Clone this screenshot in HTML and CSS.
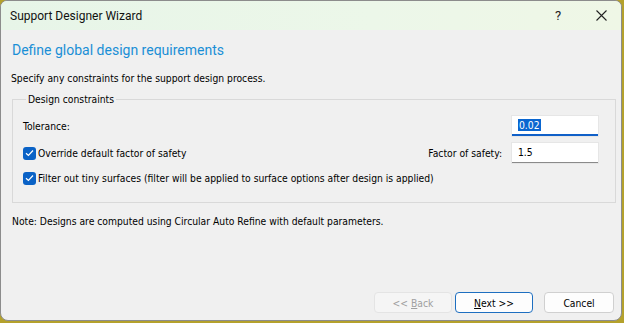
FILE: index.html
```html
<!DOCTYPE html>
<html>
<head>
<meta charset="utf-8">
<link rel="stylesheet" href="styles.css">
</head>
<body>
<div class="window">
  <div class="titlebar">
    <span class="title">Support Designer Wizard</span>
    <span class="help">?</span>
    <span class="close">
      <svg width="11" height="11" viewBox="0 0 11 11"><path d="M0.5 0.5 L10.5 10.5 M10.5 0.5 L0.5 10.5" stroke="#222" stroke-width="1.1" fill="none"/></svg>
    </span>
  </div>
  <div class="content">
    <h1 class="heading">Define global design requirements</h1>
    <p class="intro">Specify any constraints for the support design process.</p>
    <fieldset class="group">
      <legend>Design constraints</legend>
      <div class="row row-tol">
        <span class="label">Tolerance:</span>
        <span class="input input-focus"><span class="sel">0.02</span></span>
      </div>
      <div class="row row-fos">
        <span class="check"><svg width="9" height="8" viewBox="0 0 9 8"><path d="M1 4.2 L3.4 6.5 L8 1.5" stroke="#fff" stroke-width="1.2" fill="none"/></svg></span>
        <span class="label">Override default factor of safety</span>
        <span class="spacer"></span>
        <span class="label fos-label">Factor of safety:</span>
        <span class="input">1.5</span>
      </div>
      <div class="row row-filter">
        <span class="check"><svg width="9" height="8" viewBox="0 0 9 8"><path d="M1 4.2 L3.4 6.5 L8 1.5" stroke="#fff" stroke-width="1.2" fill="none"/></svg></span>
        <span class="label">Filter out tiny surfaces (filter will be applied to surface options after design is applied)</span>
      </div>
    </fieldset>
    <p class="note">Note: Designs are computed using Circular Auto Refine with default parameters.</p>
    <div class="buttons">
      <button class="btn btn-back" disabled>&lt;&lt; <u>B</u>ack</button>
      <button class="btn btn-next"><u>N</u>ext &gt;&gt;</button>
      <button class="btn btn-cancel">Cancel</button>
    </div>
  </div>
</div>
</body>
</html>
```
FILE: styles.css
```css
html, body {
  margin: 0;
  padding: 0;
}
body {
  width: 624px;
  height: 323px;
  background: #b4a12c;
  overflow: hidden;
}
.window {
  width: 620px;
  height: 319px;
  background: #f0f0f0;
  border: 1px solid #8c8c8c;
  border-radius: 7px 7px 8px 8px;
  overflow: hidden;
  display: flex;
  flex-direction: column;
  font-family: "DejaVu Sans Condensed", "DejaVu Sans", sans-serif;
  font-size: 10.25px;
  color: #000;
}
.titlebar {
  height: 29px;
  flex: none;
  display: flex;
  align-items: center;
  background: linear-gradient(90deg, #e7f5e8 0%, #ecf7e9 60%, #eff7e6 100%);
  font-family: Roboto, "Noto Sans", sans-serif;
  font-size: 12px;
}
.title {
  margin-left: 9px;
  flex: 1;
  color: #111;
}
.help {
  width: 14px;
  text-align: center;
  margin-right: 31px;
  font-size: 13px;
  color: #222;
}
.close {
  width: 11px;
  height: 11px;
  margin-right: 14px;
  display: flex;
}
.content {
  flex: 1;
  display: flex;
  flex-direction: column;
  padding: 0 5px 0 9px;
}
.heading {
  margin: 10px 0 0 2px;
  font-family: Roboto, "Noto Sans", sans-serif;
  font-weight: normal;
  font-size: 14px;
  color: #1a8fd6;
  line-height: 20px;
}
.intro {
  margin: 11px 0 0 1px;
  line-height: 14px;
}
.group {
  margin: 7px 0 0 2px;
  padding: 10px 17px 16px 10px;
  border: 1px solid #d9d9d9;
  border-radius: 0;
  display: flex;
  flex-direction: column;
}
.group legend {
  padding: 0 2px;
  margin-left: 3px;
  line-height: 14px;
}
.row {
  display: flex;
  align-items: center;
}
.row-tol {
  height: 20px;
  justify-content: space-between;
}
.row-fos {
  margin-top: 7px;
  height: 20px;
}
.row-filter {
  margin-top: 7px;
  height: 16px;
}
.spacer { flex: 1; }
.fos-label { margin-right: 10px; }
.input {
  width: 80px;
  height: 19px;
  background: #fff;
  border-bottom: 1px solid #8a8a8a;
  box-shadow: 0 0 0 1px #e6e6e6;
  padding-left: 6px;
  line-height: 18px;
  box-sizing: content-box;
}
.input-focus {
  height: 18px;
  border-bottom: 2px solid #1060c8;
}
.sel {
  background: #0a66d0;
  color: #fff;
  padding: 0 1px;
}
.check {
  width: 13px;
  height: 13px;
  border-radius: 3px;
  background: #0a62c6;
  display: flex;
  align-items: center;
  justify-content: center;
  margin-right: 2px;
}
.note {
  margin: 11px 0 0 2px;
  line-height: 14px;
}
.buttons {
  margin-top: auto;
  margin-bottom: 7px;
  margin-right: 2px;
  display: flex;
  justify-content: flex-end;
}
.btn {
  height: 21px;
  width: 78px;
  font-family: "DejaVu Sans Condensed", "DejaVu Sans", sans-serif;
  font-size: 10.25px;
  background: #fdfdfd;
  border: 1px solid #d0d0d0;
  border-radius: 4px;
  color: #000;
  padding: 0;
}
.btn-back {
  color: #a0a0a0;
  background: #f5f5f5;
  border-color: #e4e4e4;
}
.btn-next {
  margin-left: 3px;
  border-color: #1e6fc0;
}
.btn-cancel {
  width: 70px;
  margin-left: 11px;
}
```
